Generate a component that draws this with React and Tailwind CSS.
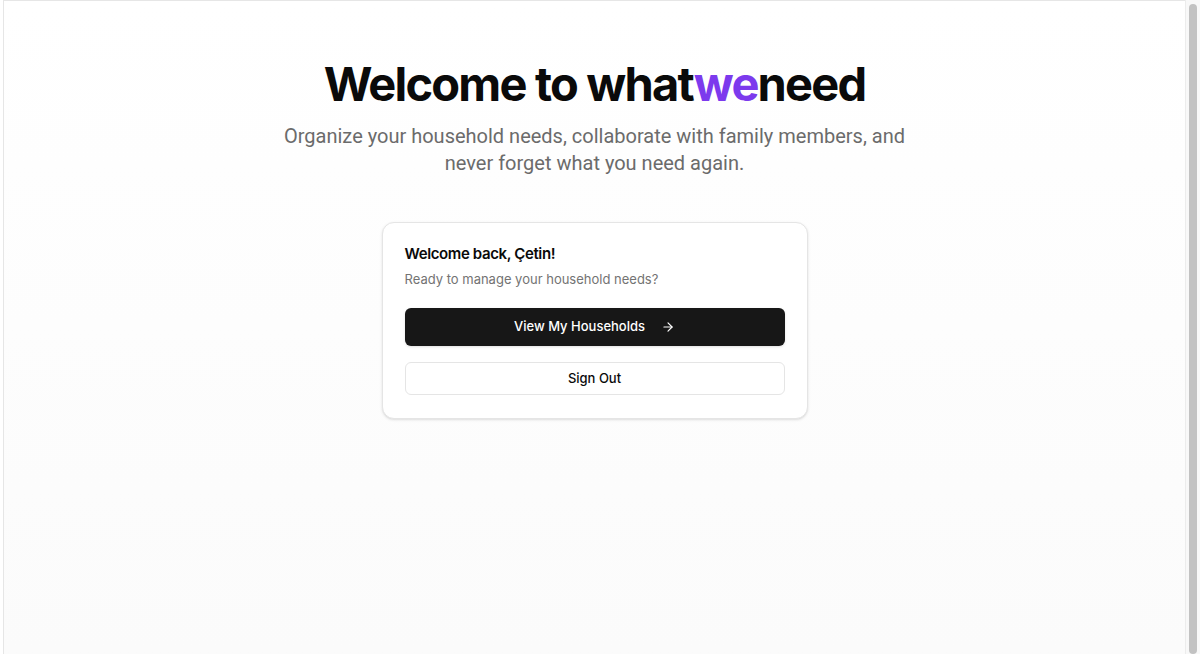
import React from "react";

export default function App() {
  return (
    <div
      className="flex h-[654px] w-[1200px] overflow-hidden bg-white"
      style={{ fontFamily: "Inter, 'Noto Sans', sans-serif" }}
    >
      <div className="w-[3px] shrink-0 bg-white" />
      <div className="w-px shrink-0 bg-[#e6e6e6]" />
      <main className="flex flex-1 flex-col border-t border-[#e6e6e6] bg-gradient-to-b from-white to-[#fbfbfb]">
        <div className="flex flex-col items-center pt-[53px]">
          <h1 className="text-[47px] font-bold leading-[60px] tracking-[-0.038em] text-[#0a0a0a]">
            Welcome to what<span className="text-[#7c3aed]">we</span>need
          </h1>
          <p
            className="mt-[9px] w-[640px] text-center text-[20px] leading-[27px] text-[#6b6b6b]"
            style={{ fontFamily: "Roboto, 'Noto Sans', sans-serif" }}
          >
            Organize your household needs, collaborate with family members, and never forget what you need again.
          </p>
          <div className="mt-[45px] w-[426px] rounded-xl border border-[#e5e5e5] bg-white px-[22px] pt-[23px] pb-[23px] shadow-[0_1px_3px_rgba(0,0,0,0.1),0_1px_2px_-1px_rgba(0,0,0,0.1)]">
            <h2 className="text-[15px] font-semibold leading-[16px] tracking-tight text-[#0a0a0a]">
              Welcome back, Çetin!
            </h2>
            <p className="mt-[7px] text-[13px] leading-[20px] text-[#737373]">
              Ready to manage your household needs?
            </p>
            <button className="mt-[19px] flex h-[38px] w-full items-center justify-center gap-4 rounded-md bg-[#171717] text-[13px] font-medium text-white shadow-sm">
              <span>View My Households</span>
              <svg width="14" height="14" viewBox="0 0 24 24" fill="none" stroke="currentColor" strokeWidth="2" strokeLinecap="round" strokeLinejoin="round">
                <path d="M5 12h14" />
                <path d="m12 5 7 7-7 7" />
              </svg>
            </button>
            <button className="mt-[16px] flex h-[33px] w-full items-center justify-center rounded-md border border-[#e5e5e5] bg-white text-[13px] font-medium text-[#0a0a0a]">
              Sign Out
            </button>
          </div>
        </div>
      </main>
      <div className="flex w-[15px] shrink-0 justify-center border-l border-[#ececec] bg-[#f8f8f8] pt-[4px]">
        <div className="h-full w-[8px] rounded-full bg-[#c2c2c2]" />
      </div>
    </div>
  );
}
